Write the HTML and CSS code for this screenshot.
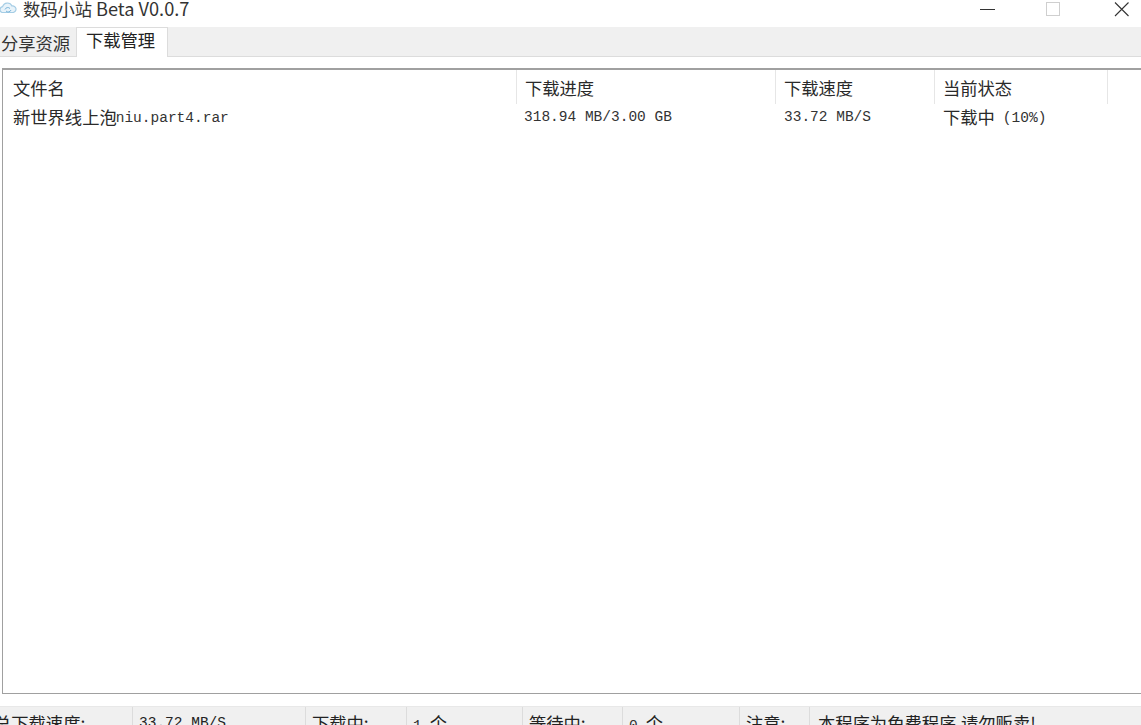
FILE: index.html
```html
<!DOCTYPE html>
<html lang="zh-CN">
<head>
<meta charset="utf-8">
<title>数码小站 Beta V0.0.7</title>
<link rel="stylesheet" href="styles.css">
</head>
<body>
<div class="window">
  <header class="titlebar">
    <svg class="app-icon" width="18" height="16" viewBox="0 0 18 16"><path d="M3 11.5a3 3 0 0 1 .6-5.8A5 5 0 0 1 13 5a3.2 3.2 0 0 1 1.5 6.3z" fill="#e8f3fa" stroke="#a5cde5" stroke-width="1.2"/><path d="M6 8.5a3 3 0 0 1 5-1M12 9a3 3 0 0 1-5 1" fill="none" stroke="#7ab5da" stroke-width="1"/></svg>
    <span class="title">数码小站 <span class="title-latin">Beta V0.0.7</span></span>
    <div class="controls">
      <svg class="ctl ctl-min" width="16" height="16" viewBox="0 0 16 16"><path d="M0 8.5h15" stroke="#333" stroke-width="1"/></svg>
      <svg class="ctl ctl-max" width="15" height="16" viewBox="0 0 15 16"><rect x="1.5" y="1.5" width="13" height="13" fill="none" stroke="#cfcfcf"/></svg>
      <svg class="ctl ctl-close" width="16" height="16" viewBox="0 0 16 16"><path d="M1 1.5l13.5 13.5M14.5 1.5L1 15" stroke="#333" stroke-width="1.1"/></svg>
    </div>
  </header>
  <nav class="tabs">
    <div class="tab">分享资源</div>
    <div class="tab active">下载管理</div>
  </nav>
  <main class="content">
    <section class="list">
      <div class="row head">
        <div class="cell c1">文件名</div>
        <div class="cell c2">下载进度</div>
        <div class="cell c3">下载速度</div>
        <div class="cell c4">当前状态</div>
        <div class="cell c5"></div>
      </div>
      <div class="row item">
        <div class="cell c1">新世界线上泡<span class="mono inline name">niu.part4.rar</span></div>
        <div class="cell c2 mono">318.94 MB/3.00 GB</div>
        <div class="cell c3 mono">33.72 MB/S</div>
        <div class="cell c4">下载中<span class="mono inline pct">(10%)</span></div>
      </div>
    </section>
  </main>
  <footer class="status">
    <div class="st s1">总下载速度:</div>
    <div class="st s2 mono">33.72 MB/S</div>
    <div class="st s3">下载中:</div>
    <div class="st s4"><span class="mono">1</span><span class="unit">个</span></div>
    <div class="st s5">等待中:</div>
    <div class="st s6"><span class="mono">0</span><span class="unit">个</span></div>
    <div class="st s7">注意:</div>
    <div class="st s8">本程序为免费程序,请勿贩卖!</div>
  </footer>
</div>
</body>
</html>
```

FILE: styles.css
```css
* { box-sizing: border-box; }
html, body { margin: 0; height: 100%; overflow: hidden; background: #fff; }
body { font-family: "Noto Sans CJK SC", "Liberation Sans", sans-serif; font-size: 17.3px; color: #2a2a2a; }
.window { width: 1141px; height: 725px; display: flex; flex-direction: column; overflow: hidden; }
.titlebar { height: 27px; flex: none; display: flex; align-items: center; background: #fff; padding-bottom: 10px; }
.app-icon { margin-left: -1px; margin-right: 6px; flex: none; }
.title { font-size: 17.3px; line-height: 17px; color: #333; white-space: nowrap; }
.title-latin { font-size: 18.2px; }
.controls { margin-left: auto; display: flex; align-items: center; }
.ctl { flex: none; display: block; }
.ctl-min { margin-right: 49px; }
.ctl-max { margin-right: 54px; }
.ctl-close { margin-right: 11px; }
.tabs { height: 30px; flex: none; display: flex; align-items: flex-end; background: #f0f0f0; border-bottom: 1px solid #dcdcdc; }
.tab { height: 26px; line-height: 25px; padding: 0 1px; width: 76px; color: #333; white-space: nowrap; }
.tab.active { height: 30px; width: 92px; line-height: 24px; padding: 0 8px 0 9px; background: #fff; border: 1px solid #dcdcdc; border-bottom: 0; margin-bottom: -1px; color: #222; }
.content { flex: none; height: 649px; padding: 11px 0 12px 2px; background: #fff; }
.list { height: 626px; border: 1px solid #a0a0a0; border-top-width: 2px; border-right: 0; background: #fff; }
.row { display: flex; }
.head { height: 34px; }
.head .cell { height: 34px; line-height: 36px; border-right: 1px solid #e6e6e6; }
.item { height: 28px; }
.item .cell { line-height: 26px; }
.item .cell.mono { line-height: 27px; }
.cell { padding-left: 8px; white-space: nowrap; flex: none; }
.c1 { width: 514px; padding-left: 10px; }
.c2 { width: 259px; padding-left: 7px; }
.c3 { width: 159px; }
.c4 { width: 173px; }
.c5 { width: 33px; border-right: 0 !important; }
.head .c2 { padding-left: 8px; }
.mono { font-family: "Liberation Mono", monospace; font-size: 14.5px; color: #333; }
.inline { position: relative; top: -2px; }
.name { margin-left: -1px; }
.pct { margin-left: 8px; }
.unit { margin-left: 8px; }
.status { flex: 1; min-height: 0; display: flex; background: #f0f0f0; border-top: 1px solid #e8e8e8; overflow: hidden; }
.status .st { height: 40px; line-height: 32px; padding-left: 6px; border-right: 1px solid #dcdcdc; white-space: nowrap; flex: none; color: #222; }
.s1 { width: 139px; padding-left: 0 !important; margin-left: -6px; }
.s2 { width: 173px; }
.s3 { width: 101px; }
.s4 { width: 116px; }
.s5 { width: 100px; }
.s6 { width: 117px; }
.s7 { width: 70px; }
.s8 { flex: 1 !important; border-right: 0 !important; padding-left: 8px !important; }
```
